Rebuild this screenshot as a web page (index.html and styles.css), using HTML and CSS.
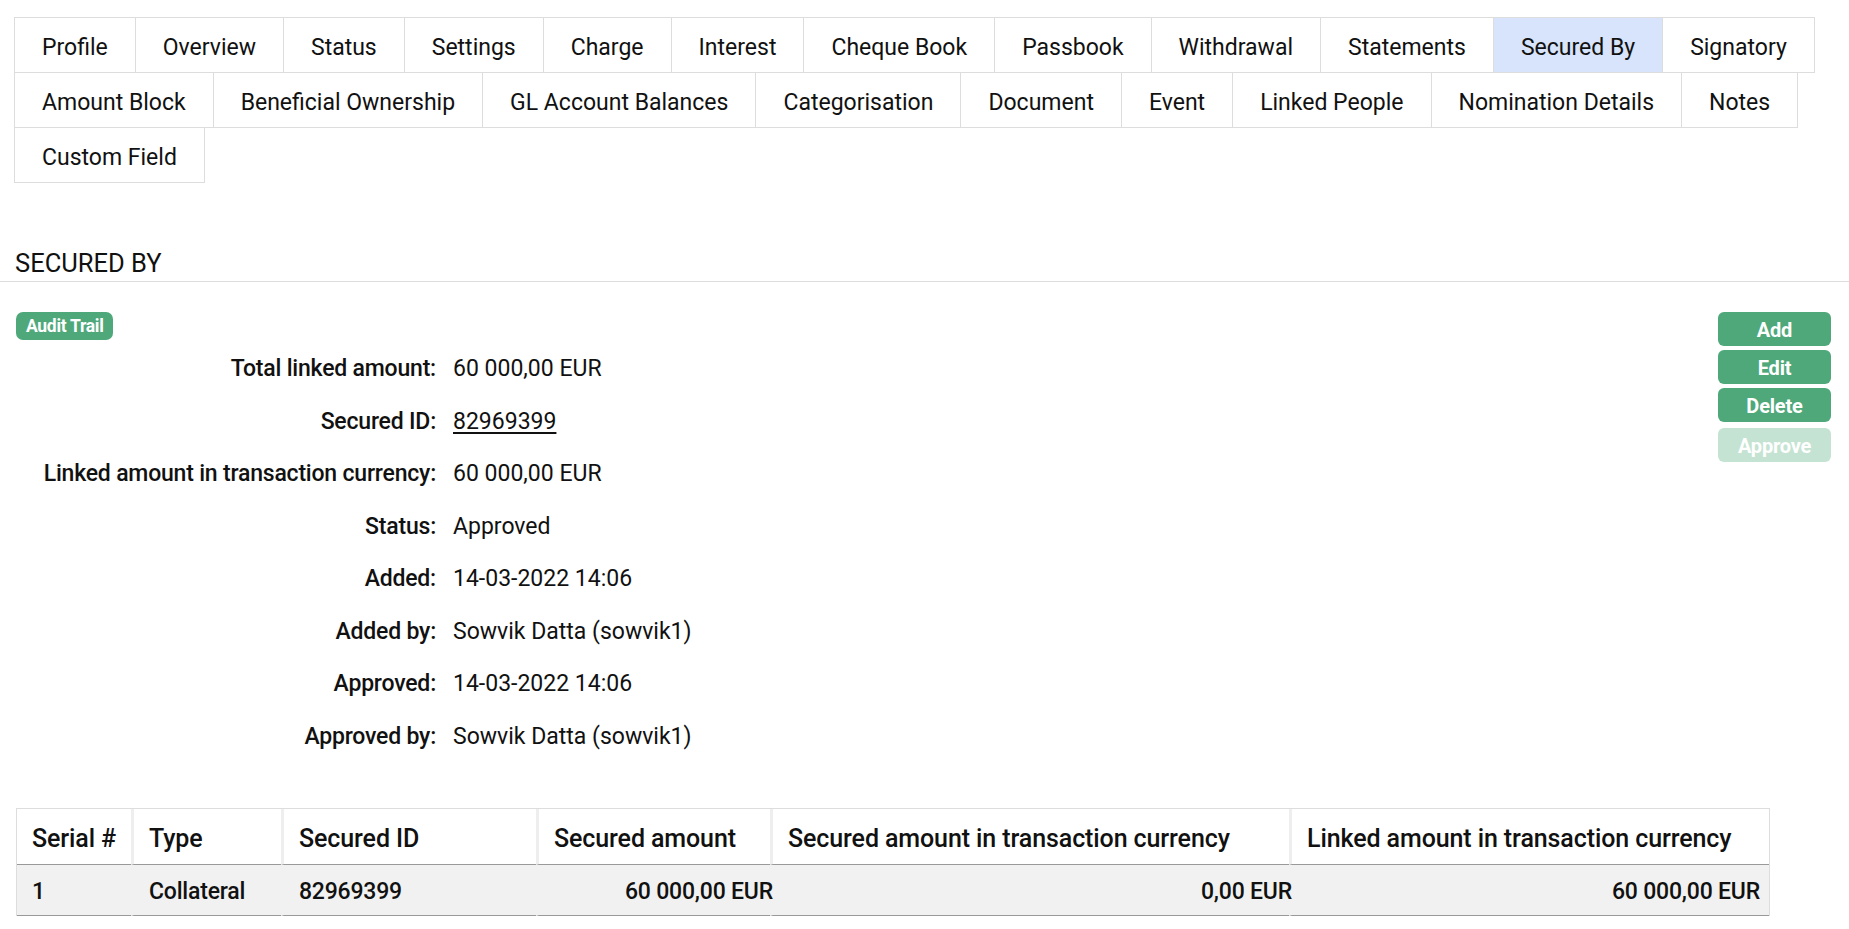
FILE: index.html
```html
<!DOCTYPE html>
<html lang="en">
<head>
<meta charset="utf-8">
<title>Secured By</title>
<link rel="stylesheet" href="styles.css">
</head>
<body>
  <nav class="tabs">
    <a class="tab">Profile</a>
    <a class="tab">Overview</a>
    <a class="tab">Status</a>
    <a class="tab">Settings</a>
    <a class="tab">Charge</a>
    <a class="tab">Interest</a>
    <a class="tab">Cheque Book</a>
    <a class="tab">Passbook</a>
    <a class="tab">Withdrawal</a>
    <a class="tab">Statements</a>
    <a class="tab tab-active">Secured By</a>
    <a class="tab">Signatory</a>
    <a class="tab">Amount Block</a>
    <a class="tab">Beneficial Ownership</a>
    <a class="tab">GL Account Balances</a>
    <a class="tab">Categorisation</a>
    <a class="tab">Document</a>
    <a class="tab">Event</a>
    <a class="tab">Linked People</a>
    <a class="tab">Nomination Details</a>
    <a class="tab">Notes</a>
    <a class="tab">Custom Field</a>
  </nav>

  <h2 class="section-title">SECURED BY</h2>

  <section class="main">
    <div class="details">
      <span class="badge">Audit Trail</span>
      <dl class="info">
        <div class="info-row"><dt>Total linked amount:</dt><dd>60 000,00&nbsp;EUR</dd></div>
        <div class="info-row"><dt>Secured ID:</dt><dd><a class="link">82969399</a></dd></div>
        <div class="info-row"><dt>Linked amount in transaction currency:</dt><dd>60 000,00&nbsp;EUR</dd></div>
        <div class="info-row"><dt>Status:</dt><dd>Approved</dd></div>
        <div class="info-row"><dt>Added:</dt><dd>14-03-2022 14:06</dd></div>
        <div class="info-row"><dt>Added by:</dt><dd>Sowvik Datta (sowvik1)</dd></div>
        <div class="info-row"><dt>Approved:</dt><dd>14-03-2022 14:06</dd></div>
        <div class="info-row"><dt>Approved by:</dt><dd>Sowvik Datta (sowvik1)</dd></div>
      </dl>
    </div>
    <div class="actions">
      <button class="btn">Add</button>
      <button class="btn">Edit</button>
      <button class="btn">Delete</button>
      <button class="btn btn-disabled">Approve</button>
    </div>
  </section>

  <table class="grid">
    <thead>
      <tr>
        <th class="c1">Serial #</th>
        <th class="c2">Type</th>
        <th class="c3">Secured ID</th>
        <th class="c4">Secured amount</th>
        <th class="c5">Secured amount in transaction currency</th>
        <th class="c6">Linked amount in transaction currency</th>
      </tr>
    </thead>
    <tbody>
      <tr>
        <td>1</td>
        <td>Collateral</td>
        <td>82969399</td>
        <td class="num"><span class="amt">60 000,00&nbsp;EUR</span></td>
        <td class="num"><span class="amt">0,00&nbsp;EUR</span></td>
        <td class="num num-last">60 000,00&nbsp;EUR</td>
      </tr>
    </tbody>
  </table>
</body>
</html>
```

FILE: styles.css
```css
* {
  box-sizing: border-box;
}

html, body {
  margin: 0;
  padding: 0;
  background: #ffffff;
}

body {
  font-family: Roboto, "Liberation Sans", Arial, sans-serif;
  color: #111111;
  font-size: 23px;
}

/* Tabs */
.tabs {
  display: flex;
  flex-wrap: wrap;
  margin: 17px 0 0 14px;
  padding-bottom: 1px;
}

.tab {
  display: block;
  height: 56px;
  line-height: 49px;
  padding: 5px 27px 0 27px;
  border: 1px solid #dddddd;
  margin-right: -1px;
  margin-bottom: -1px;
  font-size: 23px;
  color: #111111;
  white-space: nowrap;
  background: #ffffff;
}

.tab-active {
  background: #d7e4fb;
}

/* Section title */
.section-title {
  margin: 64px 0 0 0;
  padding: 1px 15px 3px 15px;
  font-size: 25.5px;
  line-height: 30px;
  font-weight: 400;
  color: #111111;
  border-bottom: 1px solid #dddddd;
}

/* Main content */
.main {
  display: flex;
  justify-content: space-between;
  align-items: flex-start;
  margin-top: 30px;
  padding: 0 18px 0 16px;
}

.badge {
  display: inline-block;
  height: 28px;
  line-height: 29px;
  padding: 0 10px;
  border-radius: 7px;
  background: #4ea87a;
  color: #ffffff;
  font-size: 17.5px;
  font-weight: 700;
  letter-spacing: -0.3px;
  vertical-align: top;
}

.info {
  margin: 0;
}

.info-row {
  display: flex;
  padding: 12px 0 6px 0;
  line-height: 34.5px;
}

.info-row dt {
  width: 420px;
  text-align: right;
  font-weight: 500;
  letter-spacing: -0.2px;
}

.info-row dd {
  margin: 0 0 0 17px;
  font-weight: 400;
  white-space: nowrap;
}

.link {
  color: #111111;
  text-decoration: underline;
  text-underline-offset: 3px;
}

.actions {
  display: flex;
  flex-direction: column;
  gap: 4px;
  width: 113px;
}

.btn {
  display: block;
  width: 113px;
  height: 34px;
  border: none;
  border-radius: 6px;
  background: #4ea87a;
  color: #ffffff;
  font-family: Roboto, "Liberation Sans", Arial, sans-serif;
  font-size: 20px;
  font-weight: 700;
  letter-spacing: -0.2px;
  padding: 2px 0 0 0;
}

.btn-disabled {
  margin-top: 2px;
  background: #c4e3d2;
}

/* Table */
.grid {
  margin: 48px 0 0 16px;
  border-collapse: separate;
  border-spacing: 0;
  border: 1px solid #dddddd;
  border-bottom: none;
  table-layout: fixed;
  width: 1754px;
}

.grid th {
  height: 56px;
  padding: 3px 0 0 15px;
  text-align: left;
  font-size: 25px;
  font-weight: 500;
  letter-spacing: -0.1px;
  white-space: nowrap;
  background: #ffffff;
  border-left: 3px solid #eeeeee;
  border-bottom: 1px solid #999999;
  vertical-align: middle;
}

.grid th.c1 {
  border-left: none;
  width: 114px;
}

.grid th.c2 { width: 150px; }
.grid th.c3 { width: 255px; }
.grid th.c4 { width: 234px; }
.grid th.c5 { width: 519px; }
.grid th.c6 { width: 480px; }

.grid td {
  height: 51px;
  padding: 3px 0 0 15px;
  background: #f1f1f1;
  border-left: 3px solid transparent;
  border-bottom: 1px solid #999999;
  font-size: 23px;
  font-weight: 500;
  letter-spacing: -0.2px;
  white-space: nowrap;
  vertical-align: middle;
}

.grid td:first-child {
  border-left: none;
}

.grid td.num {
  text-align: right;
  padding-left: 0;
  padding-right: 0;
}

.grid td.num .amt {
  margin-right: -3px;
}

.grid td.num-last {
  padding-right: 9px;
}
```
